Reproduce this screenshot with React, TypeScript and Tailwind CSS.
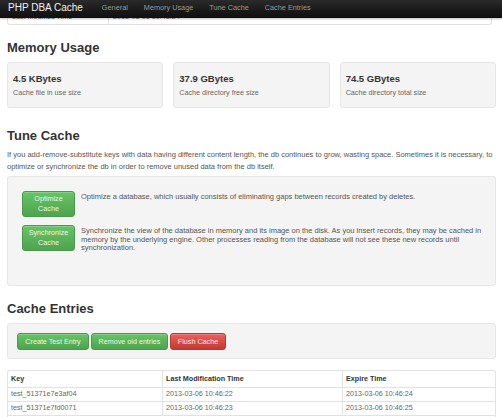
const NAV_LINKS = ['General', 'Memory Usage', 'Tune Cache', 'Cache Entries']

const STATS = [
  { value: '4.5 KBytes', label: 'Cache file in use size' },
  { value: '37.9 GBytes', label: 'Cache directory free size' },
  { value: '74.5 GBytes', label: 'Cache directory total size' },
]

const ENTRIES = [
  { key: 'test_51371e7e3af04', modified: '2013-03-06 10:46:22', expires: '2013-03-06 10:46:24' },
  { key: 'test_51371e7fd0071', modified: '2013-03-06 10:46:23', expires: '2013-03-06 10:46:25' },
]

const GREEN_BTN =
  'rounded-[3px] border border-[#4a9a4a] bg-gradient-to-b from-[#66c566] to-[#4fa34f] text-[#eaf6ea] shadow-[inset_0_1px_0_rgba(255,255,255,0.2)]'
const RED_BTN =
  'rounded-[3px] border border-[#b53a34] bg-gradient-to-b from-[#ec605b] to-[#c23a33] text-[#fbe9e8] shadow-[inset_0_1px_0_rgba(255,255,255,0.2)]'

function Heading({ children, className }: { children: string; className: string }) {
  return <h2 className={`text-[13px] font-bold leading-[15px] text-[#333] ${className}`}>{children}</h2>
}

export default function App() {
  return (
    <div className="relative w-[502px] h-[417px] overflow-hidden bg-white font-['Liberation_Sans',Arial,sans-serif] text-[7.2px] text-[#555]">
      {/* fixed navbar lies over the scrolled page */}
      <nav className="absolute left-0 right-0 top-0 z-10 flex h-[18px] items-center bg-gradient-to-b from-[#2a2a2a] to-[#0f0f0f] pb-[2px] shadow-[0_1px_2px_rgba(0,0,0,0.25)]">
        <span className="ml-[8px] mr-[19px] text-[10px] leading-none text-[#f2f2f2]">PHP DBA Cache</span>
        <div className="flex gap-[16px] text-[7.3px] leading-none text-[#9a9a9a]">
          {NAV_LINKS.map((l) => (
            <span key={l}>{l}</span>
          ))}
        </div>
      </nav>

      <div className="pl-[7px] pr-[6px]">
        {/* last row of the General table, mostly scrolled under the navbar */}
        <div className="mt-[11px] mr-[4px] flex h-[14px] items-center rounded-b-[3px] border border-t-0 border-[#e2e2e2] text-[#666]">
          <div className="flex h-full w-[101px] items-center border-r border-[#e2e2e2] pl-[4px]">Last Modified Time</div>
          <div className="pl-[4px]">2013-03-06 10:45:24</div>
        </div>

        <Heading className="mt-[14.5px]">Memory Usage</Heading>
        <div className="mt-[7.5px] grid grid-cols-3 gap-[10px]">
          {STATS.map((s) => (
            <div key={s.value} className="h-[46px] rounded-[3px] border border-[#e6e6e6] bg-[#f4f4f4] px-[5px] pt-[10px]">
              <div className="text-[9.5px] font-bold leading-[11px] text-[#333]">{s.value}</div>
              <div className="mt-[3.5px] leading-[10px] text-[#666]">{s.label}</div>
            </div>
          ))}
        </div>

        <Heading className="mt-[19.5px]">Tune Cache</Heading>
        <p className="mt-[6.5px] text-[7.5px] leading-[11.5px] text-[#555]">
          If you add-remove-substitute keys with data having different content length, the db continues to grow, wasting space.
          Sometimes it is necessary, to optimize or synchronize the db in order to remove unused data from the db itself.
        </p>
        <div className="mt-[4px] h-[110px] rounded-[3px] border border-[#e6e6e6] bg-[#f4f4f4] pl-[14px] pt-[14px] text-[7.5px]">
          <div className="flex gap-[6px]">
            <button className={`flex h-[26px] w-[53px] shrink-0 flex-col items-center justify-center text-[7.2px] leading-[10px] ${GREEN_BTN}`}>
              <span>Optimize</span>
              <span>Cache</span>
            </button>
            <div className="pt-[2px] leading-[8.5px] text-[#555]">
              Optimize a database, which usually consists of eliminating gaps between records created by deletes.
            </div>
          </div>
          <div className="mt-[8px] flex gap-[6px] pr-[4px]">
            <button className={`flex h-[26px] w-[53px] shrink-0 flex-col items-center justify-center text-[7.2px] leading-[10px] ${GREEN_BTN}`}>
              <span>Synchronize</span>
              <span>Cache</span>
            </button>
            <div className="pt-[2px] leading-[8.5px] text-[#555]">
              Synchronize the view of the database in memory and its image on the disk. As you insert records, they may be cached in
              memory by the underlying engine. Other processes reading from the database will not see these new records until
              synchronization.
            </div>
          </div>
        </div>

        <Heading className="mt-[14.8px]">Cache Entries</Heading>
        <div className="mt-[7.5px] flex h-[36px] gap-[2px] rounded-[3px] border border-[#e6e6e6] bg-[#f4f4f4] pl-[9px] pt-[9px]">
          <button className={`h-[17px] w-[72px] leading-none ${GREEN_BTN}`}>Create Test Entry</button>
          <button className={`h-[17px] w-[77px] leading-none ${GREEN_BTN}`}>Remove old entries</button>
          <button className={`h-[17px] w-[56px] leading-none ${RED_BTN}`}>Flush Cache</button>
        </div>

        <div className="mt-[11px] rounded-t-[3px] border border-b-0 border-[#e2e2e2]">
          <div className="grid h-[16px] grid-cols-[155px_180px_1fr] items-stretch font-bold text-[#333]">
            <div className="flex items-center border-r border-[#e2e2e2] pl-[3px]">Key</div>
            <div className="flex items-center border-r border-[#e2e2e2] pl-[3px]">Last Modification Time</div>
            <div className="flex items-center pl-[3px]">Expire Time</div>
          </div>
          {ENTRIES.map((e) => (
            <div key={e.key} className="grid h-[14px] grid-cols-[155px_180px_1fr] border-t border-[#e2e2e2] text-[#666]">
              <div className="flex items-center border-r border-[#e2e2e2] pl-[3px]">{e.key}</div>
              <div className="flex items-center border-r border-[#e2e2e2] pl-[3px]">{e.modified}</div>
              <div className="flex items-center pl-[3px]">{e.expires}</div>
            </div>
          ))}
          <div className="h-[14px] border-t border-[#e2e2e2]" />
        </div>
      </div>
    </div>
  )
}
